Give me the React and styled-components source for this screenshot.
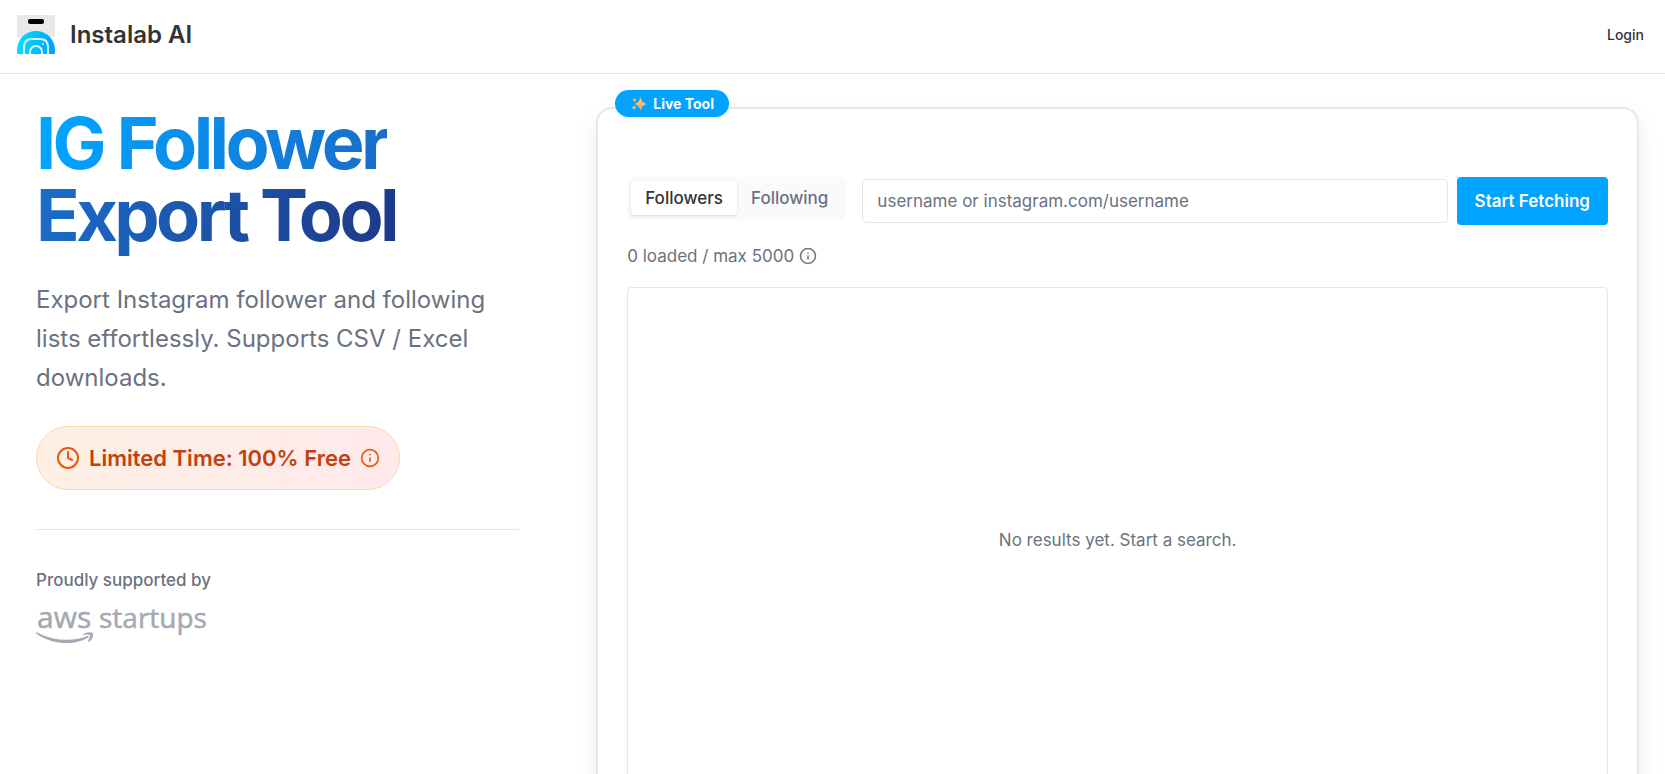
import { useState } from 'react';
import styled, { createGlobalStyle } from 'styled-components';
import { Clock, Info } from 'lucide-react';

const GlobalStyle = createGlobalStyle`
  *, *::before, *::after {
    box-sizing: border-box;
  }

  body {
    margin: 0;
    background: #ffffff;
    color: #333333;
    font-family: Inter, 'Liberation Sans', sans-serif;
    font-size: 17px;
    line-height: 24px;
  }

  button, input {
    font: inherit;
  }
`;

const Header = styled.header`
  display: flex;
  align-items: center;
  justify-content: space-between;
  height: 74px;
  padding: 0 21px 4px 17px;
  border-bottom: 1px solid #e5e7eb;
`;

const Brand = styled.a`
  display: flex;
  align-items: center;
  gap: 15px;
  color: #333333;
  font-size: 24px;
  font-weight: 600;
  line-height: 32px;
  text-decoration: none;
`;

const LoginLink = styled.a`
  color: #333333;
  font-size: 14px;
  font-weight: 500;
  text-decoration: none;
`;

const Main = styled.main`
  display: grid;
  grid-template-columns: minmax(0, 19fr) minmax(0, 41fr);
  gap: 77px;
  align-items: start;
  padding: 33px 26px 33px 36px;
`;

const Title = styled.h1`
  margin: 0 0 29px;
  font-size: 72px;
  font-weight: 700;
  letter-spacing: -0.05em;
  line-height: 72px;
`;

// inline, so the gradient carries on from the first line to the second
const GradientText = styled.span`
  background: linear-gradient(105deg, #00a3ff 5%, #1a6cc8 50%, #1e3a8a 98%);
  background-clip: text;
  color: transparent;
`;

const Lead = styled.p`
  margin: 0 0 29px;
  color: #6b7280;
  font-size: 24px;
  line-height: 39px;
`;

const Offer = styled.div`
  display: inline-flex;
  align-items: center;
  gap: 9px;
  height: 64px;
  padding: 0 19px;
  border: 1px solid #fed7aa;
  border-radius: 32px;
  background: linear-gradient(to right, #ffefe4, #feeaec);
  color: #c2410c;
  font-size: 22px;
  font-weight: 600;

  svg {
    flex: none;
    color: #ea580c;
  }
`;

const Support = styled.section`
  margin-top: 39px;
  padding-top: 38px;
  border-top: 1px solid #e5e7eb;
  color: #6b7280;
  font-weight: 500;

  p {
    margin: 0 0 9px;
  }

  svg {
    display: block;
    overflow: visible;
  }
`;

const Card = styled.section`
  position: relative;
  padding: 68px 29px 29px;
  border: 2px solid #e5e7eb;
  border-radius: 16px;
  background: #ffffff;
  box-shadow: 0 10px 24px rgba(0, 0, 0, 0.08);
`;

const Badge = styled.span`
  position: absolute;
  top: -19px;
  left: 17px;
  display: flex;
  align-items: center;
  gap: 6px;
  height: 27px;
  padding: 0 15px 0 16px;
  border-radius: 999px;
  background: #00a3ff;
  color: #ffffff;
  font-size: 14px;
  font-weight: 700;
`;

const SearchForm = styled.form`
  display: flex;
  align-items: center;
`;

const Tabs = styled.div`
  display: flex;
  align-self: flex-start;
  height: 43px;
  margin-right: 16px;
  padding: 4px;
  border-radius: 6px;
  background: #f8fafc;
`;

const Tab = styled.button`
  height: 34px;
  padding: 0 14px;
  border: 0;
  border-radius: 4px;
  background: ${props => (props.$active ? '#ffffff' : 'transparent')};
  box-shadow: ${props =>
    props.$active ? '0 1px 3px rgba(0, 0, 0, 0.15)' : 'none'};
  color: ${props => (props.$active ? '#333333' : '#6b7280')};
  font-size: 17px;
  font-weight: 500;
  cursor: pointer;
`;

const SearchInput = styled.input`
  flex: 1;
  min-width: 0;
  height: 44px;
  margin-right: 9px;
  padding: 0 14px;
  border: 1px solid #e5e7eb;
  border-radius: 4px;
  background: #ffffff;
  color: #333333;

  &::placeholder {
    color: #6b7280;
    opacity: 1;
  }
`;

const FetchButton = styled.button`
  height: 48px;
  padding: 0 18px;
  border: 0;
  border-radius: 4px;
  background: #00a3ff;
  color: #ffffff;
  font-weight: 600;
  white-space: nowrap;
  cursor: pointer;
`;

const Status = styled.p`
  display: flex;
  align-items: center;
  gap: 5px;
  margin: 19px 0;
  color: #6b7280;
`;

const Results = styled.div`
  display: flex;
  align-items: center;
  justify-content: center;
  min-height: 505px;
  border: 1px solid #e5e7eb;
  border-radius: 4px;
  color: #6b7280;
`;

const LabLogo = () => (
  <svg width="38" height="39" viewBox="0 0 38 39" aria-hidden="true">
    <defs>
      <linearGradient id="lab" x1="0" y1="0" x2="1" y2="0">
        <stop offset="0" stopColor="#00e0ff" />
        <stop offset="1" stopColor="#00a0ff" />
      </linearGradient>
    </defs>
    <rect width="38" height="22" rx="1" fill="#e8e8e8" />
    <rect x="11" y="4" width="16" height="5" rx="2" fill="#000000" />
    <path
      d="M0 38V35A19 19 0 0 1 38 35V38Q38 39 37 39H1Q0 39 0 38Z"
      fill="url(#lab)"
    />
    <g fill="none" stroke="#d9f6ff" strokeWidth="2">
      <path d="M7 39V32Q7 24 15 24H23Q31 24 31 32V39" />
      <path d="M13 39V37A6 6 0 0 1 25 37V39" />
    </g>
    <circle cx="26" cy="29" r="1" fill="#d9f6ff" />
  </svg>
);

const Sparkles = () => (
  <svg width="16" height="14" viewBox="0 0 16 14" aria-hidden="true">
    <defs>
      <linearGradient id="spark" x1="0" y1="0" x2="0" y2="1">
        <stop offset="0" stopColor="#ffd34f" />
        <stop offset="1" stopColor="#ff9a76" />
      </linearGradient>
    </defs>
    <g fill="url(#spark)">
      <path d="M9.500 0C10.500 4 11.500 5.500 16 7C11.500 8.500 10.500 10 9.500 14C8.500 10 7.500 8.500 3 7C7.500 5.500 8.500 4 9.500 0Z" />
      <path d="M3.500 0.500L4.200 2.300L6 3L4.200 3.700L3.500 5.500L2.800 3.700L1 3L2.800 2.300Z" />
      <path d="M3 8L3.800 9.800L5.600 10.600L3.800 11.400L3 13.200L2.200 11.400L0.400 10.600L2.200 9.800Z" />
    </g>
  </svg>
);

const AwsStartups = () => (
  <svg width="173" height="42" viewBox="0 0 173 42" fill="#a4a9b3">
    <g
      fontFamily="'Open Sans', sans-serif"
      fontWeight="500"
      stroke="#a4a9b3"
      strokeWidth="0.500"
    >
      <text x="1" y="27" fontSize="30">
        aws
      </text>
      <text x="63" y="27" fontSize="28">
        startups
      </text>
    </g>
    <path d="M0 31.500Q1 31 2 32C18 40 36 41 51 35Q53 34.500 53 36C39 45 16 44 0 32.500Z" />
    <path d="M47 33Q53 30 57 32Q58 37 53 41Q52 41 52 40Q54 36 54 34Q51 33 47 34Z" />
  </svg>
);

export default function App() {
  const [tab, setTab] = useState('Followers');
  const [query, setQuery] = useState('');

  return (
    <>
      <GlobalStyle />
      <Header>
        <Brand href="#">
          <LabLogo />
          Instalab AI
        </Brand>
        <LoginLink href="#">Login</LoginLink>
      </Header>
      <Main>
        <div>
          <Title>
            <GradientText>
              IG Follower
              <br />
              Export Tool
            </GradientText>
          </Title>
          <Lead>
            Export Instagram follower and following lists effortlessly. Supports
            CSV / Excel downloads.
          </Lead>
          <Offer>
            <Clock size={24} />
            Limited Time: 100% Free
            <Info size={20} />
          </Offer>
          <Support>
            <p>Proudly supported by</p>
            <AwsStartups />
          </Support>
        </div>
        <Card>
          <Badge>
            <Sparkles />
            Live Tool
          </Badge>
          <SearchForm onSubmit={e => e.preventDefault()}>
            <Tabs>
              {['Followers', 'Following'].map(name => (
                <Tab
                  key={name}
                  type="button"
                  $active={tab === name}
                  aria-pressed={tab === name}
                  onClick={() => setTab(name)}
                >
                  {name}
                </Tab>
              ))}
            </Tabs>
            <SearchInput
              type="text"
              aria-label="Instagram username"
              placeholder="username or instagram.com/username"
              value={query}
              onChange={e => setQuery(e.target.value)}
            />
            <FetchButton type="submit">Start Fetching</FetchButton>
          </SearchForm>
          <Status>
            0 loaded / max 5000
            <Info size={18} />
          </Status>
          <Results>No results yet. Start a search.</Results>
        </Card>
      </Main>
    </>
  );
}
